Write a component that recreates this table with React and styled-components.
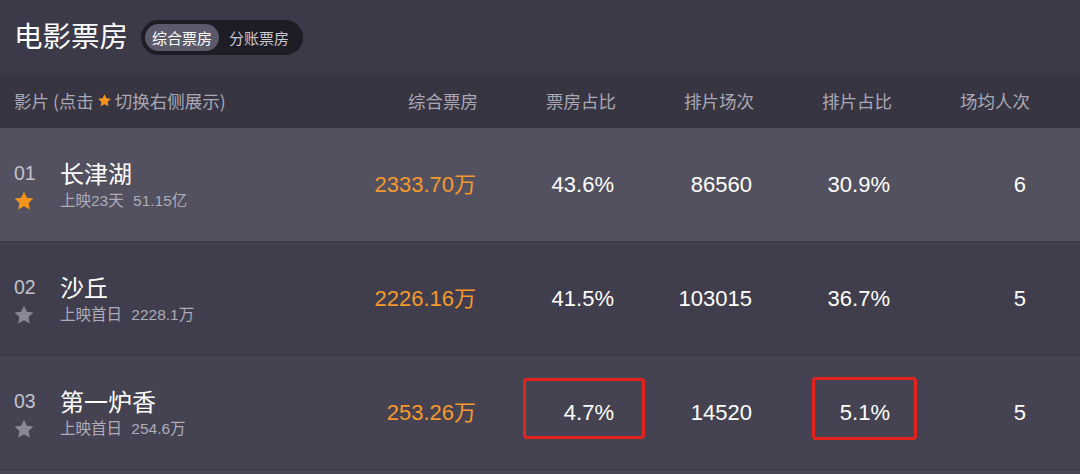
import React from "react";
import styled, { createGlobalStyle } from "styled-components";

const Global = createGlobalStyle`
  html, body { margin: 0; padding: 0; background: #3c3a48; }
  body { font-family: "Liberation Sans", "Noto Sans CJK SC", sans-serif; }
`;

const Page = styled.div`
  width: 1080px;
  height: 474px;
  background: #494756;
  display: flex;
  flex-direction: column;
  overflow: hidden;
`;

const TitleBar = styled.div`
  height: 73px;
  flex: none;
  background: #3c3a48;
  display: flex;
  align-items: center;
  padding-left: 14px;
  gap: 13px;
`;

const Title = styled.h1`
  margin: 0;
  font-family: "Noto Sans CJK SC", sans-serif;
  font-weight: 400;
  font-size: 28.5px;
  color: #ffffff;
  line-height: 1;
  padding-bottom: 2px;
`;

const Toggle = styled.div`
  display: flex;
  align-items: center;
  height: 35px;
  box-sizing: border-box;
  padding: 0 4px;
  border-radius: 18px;
  background: #1e1c25;
  margin-top: 2px;
`;

const ToggleItem = styled.span`
  display: flex;
  align-items: center;
  height: 27px;
  padding: 0 ${(p) => (p.$active ? "7px" : "10px")};
  border-radius: 14px;
  background: ${(p) => (p.$active ? "#5c5a6a" : "transparent")};
  color: ${(p) => (p.$active ? "#ffffff" : "#c9c7d0")};
  font-family: "Noto Sans CJK SC", sans-serif;
  font-size: 15px;
`;

const Grid = styled.div`
  display: grid;
  grid-template-columns: 340px repeat(5, 138px) 50px;
  align-items: center;
`;

const HeaderRow = styled(Grid)`
  height: 55px;
  flex: none;
  background: #373542;
  color: #aaa8b4;
  font-family: "Noto Sans CJK SC", sans-serif;
  font-size: 17.5px;
`;

const HeadFilm = styled.div`
  padding-left: 14px;
  display: flex;
  align-items: center;
  gap: 3px;
`;

const HeadCell = styled.div`
  text-align: right;
`;

const Row = styled(Grid)`
  height: 114px;
  box-sizing: border-box;
  flex: none;
  background: ${(p) => p.$bg};
  border-bottom: 1px solid #3a3845;
`;

const FilmCell = styled.div`
  display: grid;
  grid-template-columns: 46px auto;
  grid-template-rows: auto auto;
  padding-left: 14px;
  align-items: center;
  margin-top: 3px;
`;

const Rank = styled.div`
  font-size: 19.5px;
  color: #c3c1ca;
  line-height: 28px;
`;

const Name = styled.div`
  font-family: "Noto Sans CJK SC", sans-serif;
  font-size: 24px;
  color: #ffffff;
  line-height: 30px;
`;

const StarBox = styled.div`
  display: flex;
  align-items: center;
  margin-left: -1px;
`;

const Sub = styled.div`
  font-size: 15.5px;
  color: #aeacb8;
  line-height: 26px;
  font-family: "Liberation Sans", "Noto Sans CJK SC", sans-serif;
  word-spacing: 5px;
`;

const Num = styled.div`
  position: relative;
  text-align: right;
  font-size: 22px;
  color: ${(p) => (p.$orange ? "#f5992c" : "#ffffff")};
  padding-right: ${(p) => p.$pr || "2px"};
  line-height: 1;
`;

const Mark = styled.span`
  position: absolute;
  top: ${(p) => p.$top}px;
  left: ${(p) => p.$left}px;
  width: ${(p) => p.$w}px;
  height: ${(p) => p.$h}px;
  border: 3px solid #e5231c;
  border-radius: 4px;
  box-sizing: border-box;
`;

const Star = ({ color, size = 22 }) => (
  <svg width={size} height={size} viewBox="0 0 24 24">
    <path
      d="M12 1.8l3.1 6.6 7.1.9-5.2 4.9 1.3 7.1L12 17.8l-6.3 3.5 1.3-7.1L1.8 9.3l7.1-.9z"
      fill={color}
    />
  </svg>
);

const rows = [
  { rank: "01", name: "长津湖", sub: "上映23天 51.15亿", box: "2333.70万", share: "43.6%", shows: "86560", showShare: "30.9%", avg: "6", starred: true, bg: "#53515f" },
  { rank: "02", name: "沙丘", sub: "上映首日 2228.1万", box: "2226.16万", share: "41.5%", shows: "103015", showShare: "36.7%", avg: "5", bg: "#403e4c" },
  { rank: "03", name: "第一炉香", sub: "上映首日 254.6万", box: "253.26万", share: "4.7%", shows: "14520", showShare: "5.1%", avg: "5", bg: "#454352", marked: true },
];

export default function App() {
  return (
    <Page>
      <Global />
      <TitleBar>
        <Title>电影票房</Title>
        <Toggle>
          <ToggleItem $active>综合票房</ToggleItem>
          <ToggleItem>分账票房</ToggleItem>
        </Toggle>
      </TitleBar>
      <HeaderRow>
        <HeadFilm>
          影片 (点击 <Star color="#f7941d" size={15} /> 切换右侧展示)
        </HeadFilm>
        <HeadCell>综合票房</HeadCell>
        <HeadCell>票房占比</HeadCell>
        <HeadCell>排片场次</HeadCell>
        <HeadCell>排片占比</HeadCell>
        <HeadCell>场均人次</HeadCell>
      </HeaderRow>
      {rows.map((r) => (
        <Row key={r.rank} $bg={r.bg}>
          <FilmCell>
            <Rank>{r.rank}</Rank>
            <Name>{r.name}</Name>
            <StarBox>
              <Star color={r.starred ? "#f7941d" : "#8a8895"} />
            </StarBox>
            <Sub>{r.sub}</Sub>
          </FilmCell>
          <Num $orange>{r.box}</Num>
          <Num>
            {r.share}
            {r.marked && <Mark $left={45} $top={-24} $w={122} $h={61} />}
          </Num>
          <Num>{r.shows}</Num>
          <Num>
            {r.showShare}
            {r.marked && <Mark $left={58} $top={-25} $w={105} $h={63} />}
          </Num>
          <Num $pr="4px">{r.avg}</Num>
        </Row>
      ))}
    </Page>
  );
}
